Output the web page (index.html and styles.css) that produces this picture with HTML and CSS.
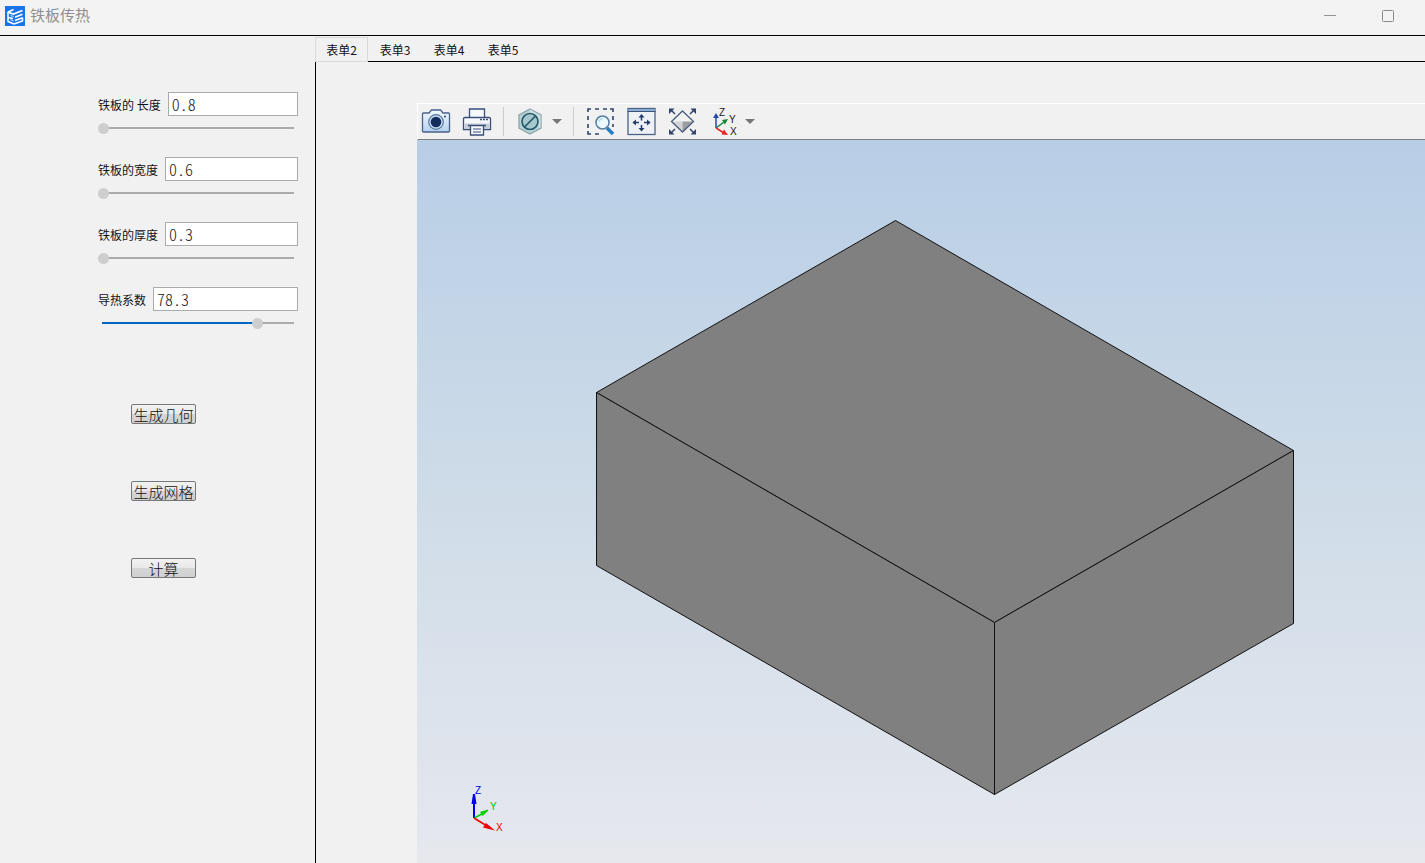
FILE: index.html
```html
<!DOCTYPE html>
<html lang="zh-CN">
<head>
<meta charset="utf-8">
<title>铁板传热</title>
<link rel="stylesheet" href="styles.css">
</head>
<body>
<header class="titlebar">
  <svg class="logo" viewBox="0 0 20 20" aria-hidden="true">
    <rect width="20" height="20" fill="#1a73e8"/>
    <g fill="none" stroke="#fff">
      <path d="M2.800 6.200L8.500 3.500M2.800 6.200L8.500 8L17.500 4.500" stroke-width="1.700"/>
      <path d="M10 11.200L17.500 8.300M10 14.500L17.500 11.800M9 18L17.500 15V11.500" stroke-width="1.500"/>
      <path d="M3 6V15.500L9 18M3 11.500L8 12.500" stroke-width="1.500"/>
      <path d="M5.500 9.500L8.500 10.500M5.500 13.500L8.500 15" stroke="#b9d6fb" stroke-width="1.200"/>
    </g>
  </svg>
  <h1 class="title">铁板传热</h1>
  <button class="window-button" type="button" aria-label="最小化"><svg viewBox="0 0 12 12"><path d="M0 5.500H12" stroke="#919191"/></svg></button>
  <button class="window-button" type="button" aria-label="最大化"><svg viewBox="0 0 12 12"><rect x=".5" y=".5" width="11" height="11" rx="1" fill="none" stroke="#8b8b8b"/></svg></button>
</header>
<div class="workspace">
  <aside class="sidebar">
    <form class="parameters">
      <div class="parameter">
        <div class="field"><label for="length">铁板的 长度</label><input class="value" id="length" type="text" value="0.8"></div>
        <input class="slider" type="range" min="0" max="100" value="0" aria-label="铁板的 长度">
      </div>
      <div class="parameter">
        <div class="field"><label for="width">铁板的宽度</label><input class="value" id="width" type="text" value="0.6"></div>
        <input class="slider" type="range" min="0" max="100" value="0" aria-label="铁板的宽度">
      </div>
      <div class="parameter">
        <div class="field"><label for="thickness">铁板的厚度</label><input class="value" id="thickness" type="text" value="0.3"></div>
        <input class="slider" type="range" min="0" max="100" value="0" aria-label="铁板的厚度">
      </div>
      <div class="parameter">
        <div class="field"><label for="conductivity">导热系数</label><input class="value" id="conductivity" type="text" value="78.3"></div>
        <input class="slider slider-filled" type="range" min="0" max="100" value="83" aria-label="导热系数">
      </div>
    </form>
    <div class="actions">
      <button class="action" type="button">生成几何</button>
      <button class="action" type="button">生成网格</button>
      <button class="action" type="button">计算</button>
    </div>
  </aside>
  <main class="main">
    <div class="tabs" role="tablist">
      <button class="tab tab-active" type="button" role="tab" aria-selected="true">表单2</button>
      <button class="tab" type="button" role="tab" aria-selected="false">表单3</button>
      <button class="tab" type="button" role="tab" aria-selected="false">表单4</button>
      <button class="tab" type="button" role="tab" aria-selected="false">表单5</button>
    </div>
    <section class="viewer">
      <div class="toolbar">
        <button class="tool" type="button" aria-label="截图">
          <svg viewBox="0 0 30 30">
            <defs><linearGradient id="body" x2="0" y2="1"><stop stop-color="#f5faff"/><stop offset="1" stop-color="#b3d0ee"/></linearGradient></defs>
            <path d="M2.500 6H8L10.500 3H19.500L22 6H27.500Q28.500 6 28.500 7V24Q28.500 25 27.500 25H2.500Q1.500 25 1.500 24V7Q1.500 6 2.500 6Z" fill="url(#body)" stroke="#4a628b" stroke-width="1.300"/>
            <circle cx="15" cy="15" r="7.300" fill="#c8dcf2" stroke="#5b789f" stroke-width="1.200"/>
            <circle cx="15" cy="15" r="5.300" fill="#142c5c"/>
            <circle cx="24" cy="9.500" r="1" fill="#28436f"/>
          </svg>
        </button>
        <button class="tool" type="button" aria-label="打印">
          <svg viewBox="0 0 30 30" fill="#f6f9fc" stroke="#3a4e78" stroke-width="1.300">
            <path d="M7.500 11V2H22.500V11"/>
            <path d="M3 10.500H27Q28.500 10.500 28.500 12V22.500H1.500V12Q1.500 10.500 3 10.500Z"/>
            <path d="M2.500 16.500H27.500V21.500H2.500Z" fill="#c4cddb" stroke="none"/>
            <path d="M18 12.500H26" stroke-width="1.500" stroke-dasharray="2 1"/>
            <path d="M6 18.500H24M8.500 19V28H21.500V19"/>
            <path d="M11 22H19M11 25H19" stroke-width="1"/>
          </svg>
        </button>
        <span class="divider"></span>
        <button class="tool tool-menu" type="button" aria-label="显示模式">
          <svg viewBox="0 0 30 30">
            <path d="M15 2L26 8V21L15 27L4 21V8Z" fill="#b9d3d4" stroke="#8ba5ad" stroke-width="1.300"/>
            <path d="M15 2.500L25.500 8.500V21L15 15Z" fill="#cde1e1"/>
            <circle cx="15" cy="14.500" r="8" fill="#a7c8cd" stroke="#265a6d" stroke-width="1.700"/>
            <path d="M9.500 20L20.500 9" stroke="#265a6d" stroke-width="1.700"/>
          </svg>
          <span class="caret"></span>
        </button>
        <span class="divider"></span>
        <button class="tool" type="button" aria-label="框选缩放">
          <svg viewBox="0 0 30 30" fill="none">
            <path d="M3 5V2H6M10 2H14M18 2H22M25 2H28V5M28 9V13M3 9V13M3 17V21M3 24V27H6M10 27H14M28 17V20" stroke="#32436c" stroke-width="1.600"/>
            <path d="M22 21L28 27" stroke="#277dbd" stroke-width="3.500"/>
            <circle cx="17.500" cy="15.500" r="6.500" fill="#eef9ff" stroke="#547f9f" stroke-width="1.500"/>
            <path d="M14 14.500Q15 11.500 18 11.500" stroke="#a8ddeb" stroke-width="1.500"/>
          </svg>
        </button>
        <button class="tool" type="button" aria-label="平移">
          <svg viewBox="0 0 30 30">
            <rect x="2" y="1.500" width="27" height="26" fill="#edf1f5" stroke="#4b6389" stroke-width="1.300"/>
            <path d="M2.500 2H28.500V4.500H2.500Z" fill="#8aadd0"/><path d="M1.500 4.500H29.500" stroke="#3b537c"/>
            <path d="M15.500 9V13.500M15.500 18V23M7 15.500H13M18 15.500H24" stroke="#233b66" stroke-width="1.500"/>
            <path d="M12.500 10.500L15.500 7L18.500 10.500ZM12.500 21L15.500 24.500L18.500 21ZM10 12.500L6.500 15.500L10 18.500ZM21 12.500L24.500 15.500L21 18.500Z" fill="#233b66"/>
          </svg>
        </button>
        <button class="tool" type="button" aria-label="适合窗口">
          <svg viewBox="0 0 30 30">
            <path d="M15.500 4L26.500 14.500H4.500Z" fill="#f2f2f2"/><path d="M4.500 14.500H15.500V25Z" fill="#d3d4d5"/><path d="M15.500 14.500H26.500L15.500 25Z" fill="#9b9da2"/>
            <path d="M15.500 4L26.500 14.500L15.500 25L4.500 14.500Z" fill="none" stroke="#485c82" stroke-width="1.300"/>
            <path d="M4 3L8 7M27 3L23 7M4 26L8 22M27 26L23 22" stroke="#32436c" stroke-width="1.500"/>
            <path d="M2 1.500H7.500L2 7ZM29 1.500H23.500L29 7ZM2 27.500H7.500L2 22ZM29 27.500H23.500L29 22Z" fill="#32436c"/>
          </svg>
        </button>
        <button class="tool tool-menu" type="button" aria-label="视图方向">
          <svg viewBox="0 0 30 30" font-family="Liberation Sans, sans-serif" font-size="10" fill="#202020">
            <path d="M8 21V9" stroke="#2448ad" stroke-width="1.500"/><path d="M5 11L8 6L11 11Z" fill="#2448ad"/>
            <path d="M8 21L16 15" stroke="#15853b" stroke-width="1.500"/><path d="M14 13L20 12L17 17.500Z" fill="#15853b"/>
            <path d="M8 21L16 26" stroke="#ec2427" stroke-width="1.500"/><path d="M16 22.500L20 28L13.500 27.500Z" fill="#ec2427"/>
            <text x="11" y="9">Z</text><text x="21" y="16">Y</text><text x="22" y="28">X</text>
          </svg>
          <span class="caret"></span>
        </button>
      </div>
      <div class="canvas">
        <svg class="solid" viewBox="0 0 1008 723" role="img" aria-label="铁板几何">
          <g fill="#808080" stroke="#101010" stroke-linejoin="round">
            <path d="M478.500 80.500L876.500 310.500L577.500 482.500L179.500 252.500Z"/>
            <path d="M179.500 252.500L577.500 482.500V654.500L179.500 425.500Z"/>
            <path d="M577.500 482.500L876.500 310.500V483.500L577.500 654.500Z"/>
          </g>
        </svg>
        <svg class="triad" viewBox="0 0 40 50" font-family="Liberation Sans, sans-serif" font-size="10" aria-hidden="true">
          <path d="M7 34V16" stroke="#0000f0" stroke-width="2"/><path d="M4.500 20L6 10H8L9.500 20Z" fill="#0000f0"/>
          <path d="M7 34L15 30" stroke="#00d000" stroke-width="1.500"/><path d="M13 28L21 25.500V27L15.500 32Z" fill="#00d000"/>
          <path d="M7 34L20 42" stroke="#f00000" stroke-width="1.500"/><path d="M19 39L28 46.500L16 43.500Z" fill="#f00000"/>
          <text x="8" y="10" fill="#0000f0">Z</text><text x="23" y="26" fill="#00c400">Y</text><text x="29" y="47" fill="#f00000">X</text>
        </svg>
      </div>
    </section>
  </main>
</div>
</body>
</html>
```
FILE: styles.css
```css
* { box-sizing: border-box; }

body {
  margin: 0;
  min-height: 100vh;
  display: flex;
  flex-direction: column;
  background: #f1f1f1;
  color: #111;
  font-family: "Noto Sans CJK SC", sans-serif;
  font-size: 12px;
}

button { padding: 0; border: 0; background: none; color: inherit; font: inherit; }
svg { display: block; }

.titlebar {
  display: flex;
  align-items: center;
  height: 36px;
  padding: 0 2px 4px 5px;
  border-bottom: 1px solid #000;
  background: #f3f3f3;
}
.logo { width: 20px; height: 20px; }
.title { flex: 1; margin: 0 0 2px 5px; color: #8f8f8f; font-size: 15px; line-height: 24px; font-weight: 400; }
.window-button { display: grid; place-items: center; width: 58px; height: 30px; }
.window-button + .window-button { margin-right: 6px; }
.window-button svg { width: 12px; height: 12px; }

.workspace { flex: 1; display: grid; grid-template-columns: 315px minmax(0, 1fr); }

.sidebar { padding: 56px 17px 0 97px; }
.parameters { display: grid; grid-template-columns: minmax(0, 1fr); gap: 21px; }
.field { display: flex; align-items: center; gap: 7px; height: 24px; margin-left: 1px; }
.field label { white-space: pre; }
.value {
  flex: 1;
  min-width: 0;
  height: 24px;
  padding: 0 3px;
  border: 1px solid #ababab;
  background: #fff;
  color: #222;
  font-family: "Noto Sans CJK SC", sans-serif;
  font-size: 16px;
  font-weight: 300;
  font-feature-settings: "hwid";
}

.slider {
  display: block;
  width: 100%;
  height: 16px;
  margin: 4px 0 0;
  padding: 0 3px 0 1px;
  appearance: none;
  background: linear-gradient(#ababab, #ababab) 5px 7px / calc(100% - 9px) 2px no-repeat;
}
.slider-filled {
  background-image: linear-gradient(to right, #0067c0 80%, #ababab 80%);
}
.slider::-webkit-slider-thumb { appearance: none; width: 11px; height: 11px; border-radius: 50%; background: #cecece; }

.actions { display: grid; justify-items: start; gap: 57px; padding: 73px 0 0 34px; }
.action {
  width: 65px;
  height: 20px;
  border: 1px solid #777;
  border-radius: 2px;
  background: linear-gradient(#f2f2f2, #e8e8e8 50%, #d6d6d6 50%, #d0d0d0);
  font-size: 15px;
  font-weight: 300;
  line-height: 17px;
  white-space: nowrap;
}

.main { display: flex; flex-direction: column; min-width: 0; }
.tabs { display: flex; height: 26px; }
.tabs::after { content: ""; flex: 1; border-bottom: 1px solid #000; }
.tab { width: 54px; padding-top: 2px; border-bottom: 1px solid #000; }
.tab-active { width: 53px; margin-top: 1px; padding: 0; border: 1px solid #d9d9d9; }
.viewer { flex: 1; display: flex; flex-direction: column; padding: 41px 0 0 101px; border-left: 1px solid #000; }

.toolbar {
  display: flex;
  align-items: center;
  gap: 11px;
  height: 37px;
  padding-left: 3px;
  border-top: 1px solid #fff;
  border-left: 1px solid #fff;
  border-bottom: 1px solid #808080;
}
.tool { display: flex; align-items: center; }
.tool svg { width: 30px; height: 30px; }
.tool-menu { gap: 7px; }
.caret { border: 5px solid transparent; border-top-color: #777; border-bottom: 0; }
.divider { width: 1px; height: 29px; background: #ccc; }

.canvas { flex: 1; display: flex; position: relative; background: linear-gradient(#b8cee6, #cfdce8 50%, #e6e8ee); }
.solid { width: 100%; }
.triad { position: absolute; left: 50px; bottom: 29px; width: 40px; height: 50px; }
```
